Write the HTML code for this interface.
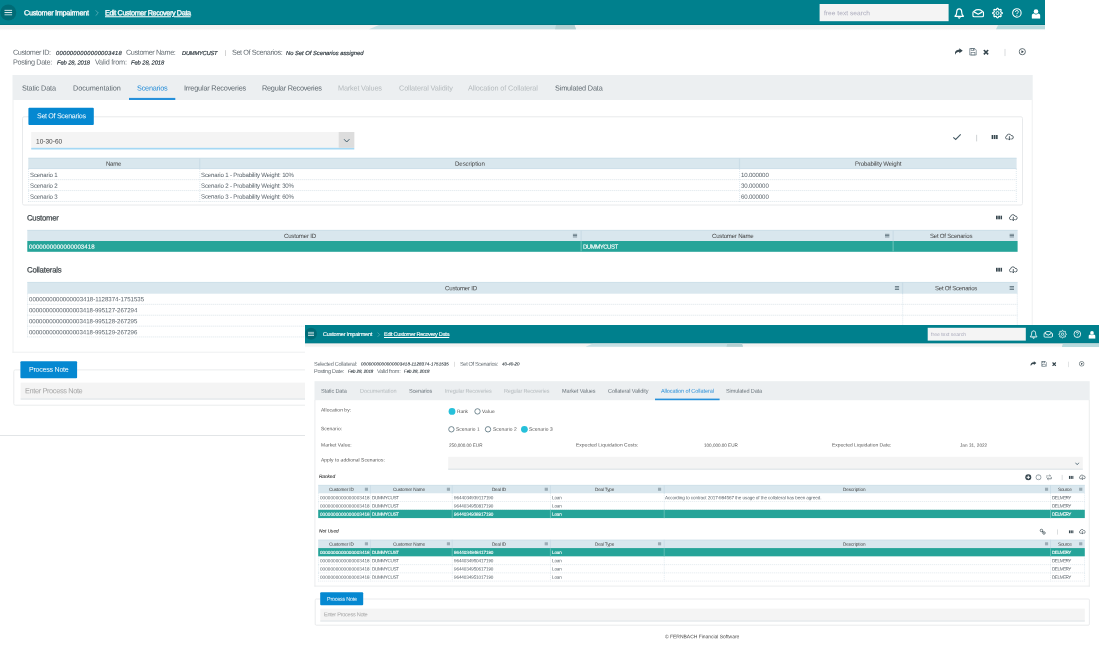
<!DOCTYPE html>
<html><head><meta charset="utf-8"><title>Edit Customer Recovery Data</title>
<style>
html,body{margin:0;padding:0;background:#fff;}
body{width:1099px;height:649px;position:relative;overflow:hidden;font-family:"Liberation Sans",sans-serif;}
#root{position:absolute;left:0;top:0;width:1099px;height:649px;overflow:hidden;will-change:transform;}
#root svg.layer,#root span.t{position:absolute;left:0;top:0;}
span.t{white-space:nowrap;display:block;}
</style></head><body><div id="root">
<svg class="layer" width="1099" height="649" viewBox="0 0 1099 649"><defs><linearGradient id="g1" x1="0" y1="0" x2="0" y2="1"><stop offset="0%" stop-color="#f4f2f1"/><stop offset="60%" stop-color="#f1f3f2"/><stop offset="100%" stop-color="#fff"/></linearGradient></defs>
<rect x="0" y="0" width="1045" height="25" fill="#00808d"/>
<rect x="0" y="25" width="1045" height="5.6" fill="url(#g1)"/>
<rect x="0" y="24.2" width="1045" height="0.8" fill="#00737f"/>
<svg x="369" y="25" width="208" height="5" viewBox="0 0 208 5"><polygon points="0,4.2 10,0 205.5,0 207,4.2" fill="#c6e0e4"/><polygon points="186,4.2 187,0 205.5,0 207,4.2" fill="#b4d0d2"/></svg>
<svg x="996" y="25" width="49" height="5" viewBox="0 0 49 5"><polygon points="0,4.3 2,0.3 49,0.3 49,4.3" fill="#b7dadd"/></svg>
<rect x="0.3" y="4.5" width="16" height="16" rx="8" fill="rgba(0,0,0,.16)"/>
<svg x="4.3" y="9.6" width="8" height="6" viewBox="0 0 80 60"><rect x="0" y="2" width="80" height="9" fill="#fff"/><rect x="0" y="25.5" width="80" height="9" fill="#fff"/><rect x="0" y="49" width="80" height="9" fill="#fff"/></svg>
<svg x="94" y="9.5" width="6" height="7" viewBox="0 0 6 7"><path d="M1.6 0.8 L4.3 3.5 L1.6 6.2" fill="none" stroke="#6fb9c1" stroke-width="0.7"/></svg>
<rect x="819.6" y="4" width="129" height="17.2" fill="#f4f4f4"/>
<svg x="954" y="7.75" width="10.4" height="11.6" viewBox="0 0 20.8 23.2"><path d="M10.4 2.2 C6.6 2.2 5.4 5.6 5.4 9 C5.4 13 4 15 2.2 16.6 V17.4 H18.6 V16.6 C16.8 15 15.4 13 15.4 9 C15.4 5.6 14.2 2.2 10.4 2.2 Z" fill="none" stroke="#fff" stroke-width="2.4" stroke-linejoin="round"/><path d="M7.6 19.4 H13.2 L10.4 22 Z" fill="#fff" stroke="#fff" stroke-width="0.8" stroke-linejoin="round"/></svg>
<svg x="972.1" y="8.95" width="12.2" height="8.6" viewBox="0 0 24 17.2"><path d="M1.4 7.4 C1.4 6.2 2 5.6 3 5 L8 1.8 C9.2 1.2 14.8 1.2 16 1.8 L21 5 C22 5.6 22.6 6.2 22.6 7.4 V13 C22.6 15 21.6 15.8 19.8 15.8 H4.2 C2.4 15.8 1.4 15 1.4 13 Z" fill="none" stroke="#fff" stroke-width="2.4" stroke-linejoin="round"/><path d="M4.4 6.4 L12 10.6 L19.6 6.4" fill="none" stroke="#fff" stroke-width="2.4" stroke-linecap="round" stroke-linejoin="round"/></svg>
<svg x="991.7" y="7.25" width="11.6" height="11.6" viewBox="0 0 24 24"><polygon points="12.00,1.90 12.52,2.04 13.00,2.45 13.42,3.05 13.76,3.74 14.03,4.42 14.28,4.98 14.56,5.34 14.90,5.48 15.35,5.42 15.92,5.20 16.60,4.92 17.33,4.67 18.04,4.54 18.67,4.59 19.14,4.86 19.41,5.33 19.46,5.96 19.33,6.67 19.08,7.40 18.80,8.07 18.58,8.65 18.52,9.10 18.66,9.44 19.02,9.72 19.58,9.97 20.26,10.24 20.95,10.58 21.55,11.00 21.96,11.48 22.10,12.00 21.96,12.52 21.55,13.00 20.95,13.42 20.26,13.76 19.58,14.03 19.02,14.28 18.66,14.56 18.52,14.90 18.58,15.35 18.80,15.92 19.08,16.60 19.33,17.33 19.46,18.04 19.41,18.67 19.14,19.14 18.67,19.41 18.04,19.46 17.33,19.33 16.60,19.08 15.92,18.80 15.35,18.58 14.90,18.52 14.56,18.66 14.28,19.02 14.03,19.58 13.76,20.26 13.42,20.95 13.00,21.55 12.52,21.96 12.00,22.10 11.48,21.96 11.00,21.55 10.58,20.95 10.24,20.26 9.97,19.58 9.72,19.02 9.44,18.66 9.10,18.52 8.65,18.58 8.07,18.80 7.40,19.08 6.67,19.33 5.96,19.46 5.33,19.41 4.86,19.14 4.59,18.67 4.54,18.04 4.67,17.33 4.92,16.60 5.20,15.93 5.42,15.35 5.48,14.90 5.34,14.56 4.98,14.28 4.42,14.03 3.74,13.76 3.05,13.42 2.45,13.00 2.04,12.52 1.90,12.00 2.04,11.48 2.45,11.00 3.05,10.58 3.74,10.24 4.42,9.97 4.98,9.72 5.34,9.44 5.48,9.10 5.42,8.65 5.20,8.07 4.92,7.40 4.67,6.67 4.54,5.96 4.59,5.33 4.86,4.86 5.33,4.59 5.96,4.54 6.67,4.67 7.40,4.92 8.07,5.20 8.65,5.42 9.10,5.48 9.44,5.34 9.72,4.98 9.97,4.42 10.24,3.74 10.58,3.05 11.00,2.45 11.48,2.04" fill="none" stroke="#fff" stroke-width="2.4" stroke-linejoin="round"/><circle cx="12" cy="12" r="3.1" fill="none" stroke="#fff" stroke-width="1.9"/></svg>
<svg x="1011.8" y="7.85" width="10.2" height="10.2" viewBox="0 0 20 20"><circle cx="10" cy="10" r="8.3" fill="none" stroke="#fff" stroke-width="2.1"/><path d="M7.3 8 A2.7 2.7 0 1 1 11 10.4 C10.2 10.9 10 11.4 10 12.4" fill="none" stroke="#fff" stroke-width="1.9"/><circle cx="10" cy="14.9" r="1" fill="#fff"/></svg>
<svg x="1031.4" y="8.85" width="9.2" height="9.8" viewBox="0 0 18.4 19.6"><circle cx="9.2" cy="5.2" r="4.6" fill="#fff"/><path d="M0.6 19 V13.6 C0.6 11.2 2.4 9.6 5 9.4 C6.2 10.6 7.6 11.2 9.2 11.2 C10.8 11.2 12.2 10.6 13.4 9.4 C16 9.6 17.8 11.2 17.8 13.6 V19 C17.8 19.4 17.6 19.6 17.2 19.6 H1.2 C0.8 19.6 0.6 19.4 0.6 19 Z" fill="#fff"/></svg>
<rect x="225" y="50.2" width="0.8" height="5.8" fill="#c8c8c8"/>
<svg x="954.2" y="47.9" width="8.8" height="7.2" viewBox="0 0 20 16"><path d="M11.6 0.6 L19.4 6.4 L11.6 12.2 V8.8 C7.4 8.8 4 10.4 2.6 15.4 C0.2 9 3.6 3.8 11.6 3.8 Z" fill="#37474f"/></svg>
<svg x="969.1" y="47.9" width="7.8" height="7.8" viewBox="0 0 20 20"><path d="M1.6 1.6 H14.4 L18.4 5.6 V18.4 H1.6 Z" fill="#fff" stroke="#546670" stroke-width="1.7" stroke-linejoin="round"/><rect x="5" y="1.8" width="8" height="5" fill="none" stroke="#546670" stroke-width="1.5"/><rect x="5" y="11.4" width="10" height="7" fill="none" stroke="#546670" stroke-width="1.5"/><rect x="10" y="2.6" width="1.8" height="3.2" fill="#546670"/></svg>
<svg x="983.05" y="49.25" width="5.9" height="5.9" viewBox="0 0 12 12"><path d="M1.6 1.6 L10.4 10.4 M10.4 1.6 L1.6 10.4" stroke="#37474f" stroke-width="3.3" stroke-linecap="butt"/></svg>
<rect x="1004.6" y="48.9" width="0.8" height="7.2" fill="#cfd3d5"/>
<svg x="1018.5" y="47.9" width="7.6" height="7.6" viewBox="0 0 20 20"><circle cx="10" cy="10" r="8.2" fill="none" stroke="#37474f" stroke-width="2"/><path d="M7.8 6 L14.2 10 L7.8 14 Z" fill="#37474f"/></svg>
<rect x="12.5" y="75" width="1020.2" height="25" fill="#eceff1"/>
<rect x="129" y="97.9" width="46.3" height="2.1" fill="#2690da"/>
<line x1="1032.2" y1="100" x2="1032.2" y2="352.7" stroke="#eef0f1" stroke-width="1"/>
<line x1="12.5" y1="352.2" x2="1032.7" y2="352.2" stroke="#eef0f1" stroke-width="1"/>
<line x1="13" y1="100" x2="13" y2="352.7" stroke="#eef0f1" stroke-width="1"/>
<rect x="22.5" y="116.8" width="1000" height="88.2" rx="1.5" fill="none" stroke="#e8eaec" stroke-width="1"/>
<rect x="28.4" y="107.8" width="65.4" height="17.2" rx="1" fill="#0588d1"/>
<rect x="31.2" y="132" width="323.1" height="15.8" fill="#f4f4f4"/>
<rect x="31.2" y="147.8" width="323.1" height="1.7" fill="#a4d8f4"/>
<rect x="338.7" y="132" width="15.6" height="15.8" fill="#dddddd"/>
<svg x="343.2" y="138.4" width="7" height="5" viewBox="0 0 7 5"><path d="M0.8 0.8 L3.5 3.6 L6.2 0.8" fill="none" stroke="#45606e" stroke-width="1.0"/></svg>
<svg x="952.5" y="133.5" width="9" height="7" viewBox="0 0 9 7"><path d="M0.8 3.8 L3.2 6 L8.2 0.8" fill="none" stroke="#455a64" stroke-width="1.1"/></svg>
<rect x="976.3" y="134.8" width="0.8" height="6.6" fill="#c4c8ca"/>
<svg x="991.4" y="135" width="6.4" height="4.2" viewBox="0 0 6.4 4.2"><rect x="0.00" y="0" width="1.73" height="4.2" fill="#37474f"/><rect x="2.34" y="0" width="1.73" height="4.2" fill="#37474f"/><rect x="4.67" y="0" width="1.73" height="4.2" fill="#37474f"/></svg>
<svg x="1004.8" y="133.2" width="9.2" height="7.4" viewBox="0 2 24 19.5"><path d="M6 17.5 H5.5 A4 4 0 0 1 5 9.6 A6 6 0 0 1 16.6 8.2 A4.7 4.7 0 0 1 18.5 17.5 H18" fill="none" stroke="#37474f" stroke-width="2.2" stroke-linecap="round"/><path d="M12 11 V19.5 M9 16.8 L12 19.8 L15 16.8" fill="none" stroke="#37474f" stroke-width="2.2" stroke-linecap="round" stroke-linejoin="round"/></svg>
<rect x="28.3" y="157.9" width="988.3" height="11" fill="#d9e7ee"/>
<line x1="28.3" y1="158.2" x2="1016.6" y2="158.2" stroke="#c3d9e4" stroke-width="0.6"/>
<line x1="28.3" y1="168.6" x2="1016.6" y2="168.6" stroke="#c3d9e4" stroke-width="0.6"/>
<rect x="199.1" y="158" width="1.2" height="11" fill="#cbdde7"/>
<line x1="199.8" y1="169" x2="199.8" y2="202" stroke="#c9dae4" stroke-width="0.6" stroke-dasharray="1 1"/>
<rect x="738.9" y="158" width="1.2" height="11" fill="#cbdde7"/>
<line x1="739.6" y1="169" x2="739.6" y2="202" stroke="#c9dae4" stroke-width="0.6" stroke-dasharray="1 1"/>
<line x1="28.6" y1="169" x2="28.6" y2="202" stroke="#c9dae4" stroke-width="0.6" stroke-dasharray="1 1"/>
<line x1="1016.3" y1="169" x2="1016.3" y2="202" stroke="#c9dae4" stroke-width="0.6" stroke-dasharray="1 1"/>
<line x1="28.3" y1="179.65" x2="1016.6" y2="179.65" stroke="#cbd8e0" stroke-width="0.7" stroke-dasharray="1 1"/>
<line x1="28.3" y1="190.55" x2="1016.6" y2="190.55" stroke="#cbd8e0" stroke-width="0.7" stroke-dasharray="1 1"/>
<line x1="28.3" y1="201.45" x2="1016.6" y2="201.45" stroke="#cbd8e0" stroke-width="0.7" stroke-dasharray="1 1"/>
<svg x="996" y="215.4" width="6.2" height="4.2" viewBox="0 0 6.2 4.2"><rect x="0.00" y="0" width="1.67" height="4.2" fill="#37474f"/><rect x="2.26" y="0" width="1.67" height="4.2" fill="#37474f"/><rect x="4.53" y="0" width="1.67" height="4.2" fill="#37474f"/></svg>
<svg x="1008.7" y="213.8" width="9.2" height="7.4" viewBox="0 2 24 19.5"><path d="M6 17.5 H5.5 A4 4 0 0 1 5 9.6 A6 6 0 0 1 16.6 8.2 A4.7 4.7 0 0 1 18.5 17.5 H18" fill="none" stroke="#37474f" stroke-width="2.2" stroke-linecap="round"/><path d="M12 11 V19.5 M9 16.8 L12 19.8 L15 16.8" fill="none" stroke="#37474f" stroke-width="2.2" stroke-linecap="round" stroke-linejoin="round"/></svg>
<rect x="27.3" y="230" width="990.3" height="11" fill="#d9e7ee"/>
<line x1="27.3" y1="230.3" x2="1017.6" y2="230.3" stroke="#c3d9e4" stroke-width="0.6"/>
<rect x="27.3" y="241" width="990.3" height="10.8" fill="#26a499"/>
<rect x="580.5" y="230" width="1.3" height="11" fill="#cbdde7"/>
<rect x="580.5" y="241" width="1.3" height="10.8" fill="#5dbdb3"/>
<rect x="892.5" y="230" width="1.3" height="11" fill="#cbdde7"/>
<rect x="892.5" y="241" width="1.3" height="10.8" fill="#5dbdb3"/>
<svg x="572.7" y="233.5" width="4.6" height="4.2" viewBox="0 0 44 40"><rect x="0" y="2.4" width="44" height="7.6" fill="#566a75"/><rect x="0" y="16" width="44" height="7.6" fill="#566a75"/><rect x="0" y="29.6" width="44" height="7.6" fill="#566a75"/></svg>
<svg x="885" y="233.5" width="4.6" height="4.2" viewBox="0 0 44 40"><rect x="0" y="2.4" width="44" height="7.6" fill="#566a75"/><rect x="0" y="16" width="44" height="7.6" fill="#566a75"/><rect x="0" y="29.6" width="44" height="7.6" fill="#566a75"/></svg>
<svg x="1009.4" y="233.5" width="4.6" height="4.2" viewBox="0 0 44 40"><rect x="0" y="2.4" width="44" height="7.6" fill="#566a75"/><rect x="0" y="16" width="44" height="7.6" fill="#566a75"/><rect x="0" y="29.6" width="44" height="7.6" fill="#566a75"/></svg>
<svg x="996" y="267.6" width="6.2" height="4.2" viewBox="0 0 6.2 4.2"><rect x="0.00" y="0" width="1.67" height="4.2" fill="#37474f"/><rect x="2.26" y="0" width="1.67" height="4.2" fill="#37474f"/><rect x="4.53" y="0" width="1.67" height="4.2" fill="#37474f"/></svg>
<svg x="1008.7" y="266" width="9.2" height="7.4" viewBox="0 2 24 19.5"><path d="M6 17.5 H5.5 A4 4 0 0 1 5 9.6 A6 6 0 0 1 16.6 8.2 A4.7 4.7 0 0 1 18.5 17.5 H18" fill="none" stroke="#37474f" stroke-width="2.2" stroke-linecap="round"/><path d="M12 11 V19.5 M9 16.8 L12 19.8 L15 16.8" fill="none" stroke="#37474f" stroke-width="2.2" stroke-linecap="round" stroke-linejoin="round"/></svg>
<rect x="27.3" y="282.1" width="990.3" height="11.6" fill="#d9e7ee"/>
<line x1="27.3" y1="282.4" x2="1017.6" y2="282.4" stroke="#c3d9e4" stroke-width="0.6"/>
<rect x="901.9" y="282.1" width="1.3" height="11.6" fill="#cbdde7"/>
<svg x="894.7" y="285.9" width="4.6" height="4.2" viewBox="0 0 44 40"><rect x="0" y="2.4" width="44" height="7.6" fill="#566a75"/><rect x="0" y="16" width="44" height="7.6" fill="#566a75"/><rect x="0" y="29.6" width="44" height="7.6" fill="#566a75"/></svg>
<svg x="1009.4" y="285.9" width="4.6" height="4.2" viewBox="0 0 44 40"><rect x="0" y="2.4" width="44" height="7.6" fill="#566a75"/><rect x="0" y="16" width="44" height="7.6" fill="#566a75"/><rect x="0" y="29.6" width="44" height="7.6" fill="#566a75"/></svg>
<line x1="27.6" y1="293.6" x2="27.6" y2="337.6" stroke="#c9dae4" stroke-width="0.6" stroke-dasharray="1 1"/>
<line x1="902.7" y1="293.6" x2="902.7" y2="337.6" stroke="#c9dae4" stroke-width="0.6" stroke-dasharray="1 1"/>
<line x1="1017.3" y1="293.6" x2="1017.3" y2="337.6" stroke="#c9dae4" stroke-width="0.6" stroke-dasharray="1 1"/>
<line x1="27.3" y1="304.35" x2="1017.6" y2="304.35" stroke="#cbd8e0" stroke-width="0.7" stroke-dasharray="1 1"/>
<line x1="27.3" y1="315.25" x2="1017.6" y2="315.25" stroke="#cbd8e0" stroke-width="0.7" stroke-dasharray="1 1"/>
<line x1="27.3" y1="326.15" x2="1017.6" y2="326.15" stroke="#cbd8e0" stroke-width="0.7" stroke-dasharray="1 1"/>
<line x1="27.3" y1="336.95" x2="1017.6" y2="336.95" stroke="#cbd8e0" stroke-width="0.7" stroke-dasharray="1 1"/>
<rect x="13.8" y="369.9" width="1019" height="35.3" rx="1.5" fill="none" stroke="#eaeced" stroke-width="1"/>
<rect x="20.4" y="361.2" width="56.7" height="17" rx="1" fill="#0588d1"/>
<rect x="20.6" y="382.6" width="1006" height="17" fill="#f4f4f4"/>
<line x1="20.6" y1="399" x2="1026.6" y2="399" stroke="#dde4e8" stroke-width="1.2"/>
<rect x="0" y="435" width="1045" height="0.9" fill="#dfe3e5"/>
</svg>
<span class="t" style="left:24.40px;top:8px;transform:translateY(0.22px) rotate(0.03deg);font-size:7.3px;line-height:10.22px;color:#fff;letter-spacing:-0.288px;-webkit-text-stroke:0.3px #fff;">Customer Impairment</span>
<span class="t" style="left:104.80px;top:8px;transform:translateY(0.22px) rotate(0.03deg);font-size:7.3px;line-height:10.22px;color:#fff;letter-spacing:-0.402px;-webkit-text-stroke:0.3px #fff;text-decoration:underline;">Edit Customer Recovery Data</span>
<span class="t" style="left:823.80px;top:8px;transform:translateY(0.24px) rotate(0.03deg);font-size:6.6px;line-height:9.24px;color:#aab;letter-spacing:0.034px;">free text search</span>
<span class="t" style="left:12.80px;top:47px;transform:translateY(0.82px) rotate(0.03deg);font-size:7.3px;line-height:10.22px;color:#656d73;letter-spacing:-0.454px;">Customer ID:</span>
<span class="t" style="left:56.00px;top:48px;transform:translateY(0.92px) rotate(0.03deg);font-size:5.8px;line-height:8.12px;color:#2c363d;letter-spacing:0.245px;font-style:italic;-webkit-text-stroke:0.18px #2c363d;">0000000000000003418</span>
<span class="t" style="left:125.60px;top:47px;transform:translateY(0.82px) rotate(0.03deg);font-size:7.3px;line-height:10.22px;color:#656d73;letter-spacing:-0.406px;">Customer Name:</span>
<span class="t" style="left:182.00px;top:48px;transform:translateY(0.92px) rotate(0.03deg);font-size:5.8px;line-height:8.12px;color:#2c363d;letter-spacing:-0.262px;font-style:italic;-webkit-text-stroke:0.18px #2c363d;">DUMMYCUST</span>
<span class="t" style="left:232.30px;top:47px;transform:translateY(0.82px) rotate(0.03deg);font-size:7.3px;line-height:10.22px;color:#656d73;letter-spacing:-0.407px;">Set Of Scenarios:</span>
<span class="t" style="left:285.60px;top:48px;transform:translateY(0.92px) rotate(0.03deg);font-size:5.8px;line-height:8.12px;color:#2c363d;letter-spacing:-0.011px;font-style:italic;-webkit-text-stroke:0.18px #2c363d;">No Set Of Scenarios assigned</span>
<span class="t" style="left:12.80px;top:57px;transform:translateY(0.42px) rotate(0.03deg);font-size:7.3px;line-height:10.22px;color:#656d73;letter-spacing:-0.385px;">Posting Date:</span>
<span class="t" style="left:57.30px;top:58px;transform:translateY(0.52px) rotate(0.03deg);font-size:5.8px;line-height:8.12px;color:#2c363d;letter-spacing:-0.098px;font-style:italic;-webkit-text-stroke:0.18px #2c363d;">Feb 28, 2018</span>
<span class="t" style="left:94.60px;top:57px;transform:translateY(0.42px) rotate(0.03deg);font-size:7.3px;line-height:10.22px;color:#656d73;letter-spacing:-0.235px;">Valid from:</span>
<span class="t" style="left:131.20px;top:58px;transform:translateY(0.52px) rotate(0.03deg);font-size:5.8px;line-height:8.12px;color:#2c363d;letter-spacing:-0.089px;font-style:italic;-webkit-text-stroke:0.18px #2c363d;">Feb 28, 2018</span>
<span class="t" style="left:22.00px;top:83px;transform:translateY(0.52px) rotate(0.03deg);font-size:7.3px;line-height:10.22px;color:#5f6970;letter-spacing:-0.171px;">Static Data</span>
<span class="t" style="left:72.90px;top:83px;transform:translateY(0.52px) rotate(0.03deg);font-size:7.3px;line-height:10.22px;color:#5f6970;letter-spacing:-0.100px;">Documentation</span>
<span class="t" style="left:136.80px;top:83px;transform:translateY(0.52px) rotate(0.03deg);font-size:7.3px;line-height:10.22px;color:#2a8fd8;letter-spacing:-0.220px;">Scenarios</span>
<span class="t" style="left:183.80px;top:83px;transform:translateY(0.52px) rotate(0.03deg);font-size:7.3px;line-height:10.22px;color:#5f6970;letter-spacing:-0.186px;">Irregular Recoveries</span>
<span class="t" style="left:262.00px;top:83px;transform:translateY(0.52px) rotate(0.03deg);font-size:7.3px;line-height:10.22px;color:#5f6970;letter-spacing:-0.242px;">Regular Recoveries</span>
<span class="t" style="left:338.30px;top:83px;transform:translateY(0.52px) rotate(0.03deg);font-size:7.3px;line-height:10.22px;color:#b4babd;letter-spacing:-0.177px;">Market Values</span>
<span class="t" style="left:398.60px;top:83px;transform:translateY(0.52px) rotate(0.03deg);font-size:7.3px;line-height:10.22px;color:#b4babd;letter-spacing:-0.114px;">Collateral Validity</span>
<span class="t" style="left:468.40px;top:83px;transform:translateY(0.52px) rotate(0.03deg);font-size:7.3px;line-height:10.22px;color:#b4babd;letter-spacing:-0.119px;">Allocation of Collateral</span>
<span class="t" style="left:554.60px;top:83px;transform:translateY(0.52px) rotate(0.03deg);font-size:7.3px;line-height:10.22px;color:#5f6970;letter-spacing:-0.162px;">Simulated Data</span>
<span class="t" style="left:36.60px;top:112px;transform:translateY(0.24px) rotate(0.03deg);font-size:7.1px;line-height:9.94px;color:#fff;letter-spacing:-0.311px;">Set Of Scenarios</span>
<span class="t" style="left:35.80px;top:136px;transform:translateY(0.50px) rotate(0.03deg);font-size:6.5px;line-height:9.1px;color:#444;letter-spacing:0.026px;">10-30-60</span>
<span class="t" style="left:106.40px;top:159px;transform:translateY(0.84px) rotate(0.03deg);font-size:6.1px;line-height:8.54px;color:#444;letter-spacing:-0.291px;">Name</span>
<span class="t" style="left:454.60px;top:159px;transform:translateY(0.84px) rotate(0.03deg);font-size:6.1px;line-height:8.54px;color:#444;letter-spacing:-0.071px;">Description</span>
<span class="t" style="left:854.50px;top:159px;transform:translateY(0.84px) rotate(0.03deg);font-size:6.1px;line-height:8.54px;color:#444;letter-spacing:-0.150px;">Probability Weight</span>
<span class="t" style="left:30.00px;top:170px;transform:translateY(0.94px) rotate(0.03deg);font-size:6.1px;line-height:8.54px;color:#566068;letter-spacing:-0.152px;">Scenario 1</span>
<span class="t" style="left:201.20px;top:170px;transform:translateY(0.94px) rotate(0.03deg);font-size:6.1px;line-height:8.54px;color:#566068;letter-spacing:-0.175px;">Scenario 1 - Probability Weight: 10%</span>
<span class="t" style="left:741.20px;top:170px;transform:translateY(0.94px) rotate(0.03deg);font-size:6.1px;line-height:8.54px;color:#566068;letter-spacing:-0.129px;">10.000000</span>
<span class="t" style="left:30.00px;top:181px;transform:translateY(0.74px) rotate(0.03deg);font-size:6.1px;line-height:8.54px;color:#566068;letter-spacing:-0.152px;">Scenario 2</span>
<span class="t" style="left:201.20px;top:181px;transform:translateY(0.74px) rotate(0.03deg);font-size:6.1px;line-height:8.54px;color:#566068;letter-spacing:-0.175px;">Scenario 2 - Probability Weight: 30%</span>
<span class="t" style="left:741.20px;top:181px;transform:translateY(0.74px) rotate(0.03deg);font-size:6.1px;line-height:8.54px;color:#566068;letter-spacing:-0.129px;">30.000000</span>
<span class="t" style="left:30.00px;top:192px;transform:translateY(0.64px) rotate(0.03deg);font-size:6.1px;line-height:8.54px;color:#566068;letter-spacing:-0.152px;">Scenario 3</span>
<span class="t" style="left:201.20px;top:192px;transform:translateY(0.64px) rotate(0.03deg);font-size:6.1px;line-height:8.54px;color:#566068;letter-spacing:-0.175px;">Scenario 3 - Probability Weight: 60%</span>
<span class="t" style="left:741.20px;top:192px;transform:translateY(0.64px) rotate(0.03deg);font-size:6.1px;line-height:8.54px;color:#566068;letter-spacing:-0.129px;">60.000000</span>
<span class="t" style="left:27.30px;top:213px;transform:translateY(0.52px) rotate(0.03deg);font-size:7.8px;line-height:10.92px;color:#434a4e;letter-spacing:-0.273px;-webkit-text-stroke:0.24px #434a4e;">Customer</span>
<span class="t" style="left:283.90px;top:231px;transform:translateY(0.94px) rotate(0.03deg);font-size:6.1px;line-height:8.54px;color:#444;letter-spacing:-0.214px;">Customer ID</span>
<span class="t" style="left:712.00px;top:231px;transform:translateY(0.94px) rotate(0.03deg);font-size:6.1px;line-height:8.54px;color:#444;letter-spacing:-0.217px;">Customer Name</span>
<span class="t" style="left:929.80px;top:231px;transform:translateY(0.94px) rotate(0.03deg);font-size:6.1px;line-height:8.54px;color:#444;letter-spacing:-0.241px;">Set Of Scenarios</span>
<span class="t" style="left:29.00px;top:242px;transform:translateY(0.84px) rotate(0.03deg);font-size:6.1px;line-height:8.54px;color:#fff;letter-spacing:0.069px;-webkit-text-stroke:0.12px #fff;">0000000000000003418</span>
<span class="t" style="left:582.80px;top:242px;transform:translateY(0.84px) rotate(0.03deg);font-size:6.1px;line-height:8.54px;color:#fff;letter-spacing:-0.556px;-webkit-text-stroke:0.12px #fff;">DUMMYCUST</span>
<span class="t" style="left:27.30px;top:265px;transform:translateY(0.52px) rotate(0.03deg);font-size:7.8px;line-height:10.92px;color:#434a4e;letter-spacing:-0.215px;-webkit-text-stroke:0.24px #434a4e;">Collaterals</span>
<span class="t" style="left:444.80px;top:284px;transform:translateY(0.34px) rotate(0.03deg);font-size:6.1px;line-height:8.54px;color:#444;letter-spacing:-0.204px;">Customer ID</span>
<span class="t" style="left:934.60px;top:284px;transform:translateY(0.34px) rotate(0.03deg);font-size:6.1px;line-height:8.54px;color:#444;letter-spacing:-0.247px;">Set Of Scenarios</span>
<span class="t" style="left:29.00px;top:295px;transform:translateY(0.34px) rotate(0.03deg);font-size:6.1px;line-height:8.54px;color:#566068;letter-spacing:-0.011px;">0000000000000003418-1128374-1751535</span>
<span class="t" style="left:29.00px;top:306px;transform:translateY(0.29px) rotate(0.03deg);font-size:6.1px;line-height:8.54px;color:#566068;letter-spacing:-0.026px;">0000000000000003418-995127-267294</span>
<span class="t" style="left:29.00px;top:317px;transform:translateY(0.24px) rotate(0.03deg);font-size:6.1px;line-height:8.54px;color:#566068;letter-spacing:-0.026px;">0000000000000003418-995128-267295</span>
<span class="t" style="left:29.00px;top:328px;transform:translateY(0.19px) rotate(0.03deg);font-size:6.1px;line-height:8.54px;color:#566068;letter-spacing:-0.026px;">0000000000000003418-995129-267296</span>
<span class="t" style="left:29.00px;top:365px;transform:translateY(0.74px) rotate(0.03deg);font-size:7.1px;line-height:9.94px;color:#fff;letter-spacing:-0.256px;">Process Note</span>
<span class="t" style="left:25.00px;top:386px;transform:translateY(0.16px) rotate(0.03deg);font-size:7.4px;line-height:10.36px;color:#a6a6a6;letter-spacing:-0.374px;">Enter Process Note</span>
<svg class="layer" width="1099" height="649" viewBox="0 0 1099 649"><defs><linearGradient id="g2" x1="0" y1="0" x2="0" y2="1"><stop offset="0%" stop-color="#f4f2f1"/><stop offset="60%" stop-color="#f1f3f2"/><stop offset="100%" stop-color="#fff"/></linearGradient></defs>
<rect x="305" y="325" width="794" height="324" fill="#fff"/>
<rect x="305" y="325" width="794" height="18.4" fill="#00808d"/>
<rect x="305" y="342.9" width="794" height="0.6" fill="#00717d"/>
<rect x="305" y="343.5" width="794" height="4.2" fill="url(#g2)"/>
<svg x="585.5" y="343.6" width="158" height="4" viewBox="0 0 158 4"><polygon points="0,3.2 7.6,0 156.4,0 157.5,3.2" fill="#c6e0e4"/><polygon points="141,3.2 141.8,0 156.4,0 157.5,3.2" fill="#b4d0d2"/></svg>
<svg x="1061.8" y="343.6" width="38" height="4" viewBox="0 0 38 4"><polygon points="0,3.3 1,0.2 38,0.2 38,3.3" fill="#b7dadd"/></svg>
<rect x="305" y="327.7" width="12" height="12" rx="6" fill="rgba(0,0,0,.16)"/>
<svg x="308" y="331.6" width="6.1" height="4.6" viewBox="0 0 62 46"><rect x="0" y="2" width="62" height="7" fill="#fff"/><rect x="0" y="19.5" width="62" height="7" fill="#fff"/><rect x="0" y="37" width="62" height="7" fill="#fff"/></svg>
<svg x="376.4" y="332" width="4.6" height="5.4" viewBox="0 0 4.6 5.4"><path d="M1.2 0.6 L3.3 2.7 L1.2 4.8" fill="none" stroke="#6fb9c1" stroke-width="0.55"/></svg>
<rect x="927.7" y="327.8" width="98.1" height="12.8" fill="#f4f4f4"/>
<svg x="1029.45" y="329.97" width="8.3" height="9.26" viewBox="0 0 20.8 23.2"><path d="M10.4 2.2 C6.6 2.2 5.4 5.6 5.4 9 C5.4 13 4 15 2.2 16.6 V17.4 H18.6 V16.6 C16.8 15 15.4 13 15.4 9 C15.4 5.6 14.2 2.2 10.4 2.2 Z" fill="none" stroke="#fff" stroke-width="2.4" stroke-linejoin="round"/><path d="M7.6 19.4 H13.2 L10.4 22 Z" fill="#fff" stroke="#fff" stroke-width="0.8" stroke-linejoin="round"/></svg>
<svg x="1043.33" y="330.93" width="9.74" height="6.86" viewBox="0 0 24 17.2"><path d="M1.4 7.4 C1.4 6.2 2 5.6 3 5 L8 1.8 C9.2 1.2 14.8 1.2 16 1.8 L21 5 C22 5.6 22.6 6.2 22.6 7.4 V13 C22.6 15 21.6 15.8 19.8 15.8 H4.2 C2.4 15.8 1.4 15 1.4 13 Z" fill="none" stroke="#fff" stroke-width="2.4" stroke-linejoin="round"/><path d="M4.4 6.4 L12 10.6 L19.6 6.4" fill="none" stroke="#fff" stroke-width="2.4" stroke-linecap="round" stroke-linejoin="round"/></svg>
<svg x="1057.97" y="329.57" width="9.26" height="9.26" viewBox="0 0 24 24"><polygon points="12.00,1.90 12.52,2.04 13.00,2.45 13.42,3.05 13.76,3.74 14.03,4.42 14.28,4.98 14.56,5.34 14.90,5.48 15.35,5.42 15.92,5.20 16.60,4.92 17.33,4.67 18.04,4.54 18.67,4.59 19.14,4.86 19.41,5.33 19.46,5.96 19.33,6.67 19.08,7.40 18.80,8.07 18.58,8.65 18.52,9.10 18.66,9.44 19.02,9.72 19.58,9.97 20.26,10.24 20.95,10.58 21.55,11.00 21.96,11.48 22.10,12.00 21.96,12.52 21.55,13.00 20.95,13.42 20.26,13.76 19.58,14.03 19.02,14.28 18.66,14.56 18.52,14.90 18.58,15.35 18.80,15.92 19.08,16.60 19.33,17.33 19.46,18.04 19.41,18.67 19.14,19.14 18.67,19.41 18.04,19.46 17.33,19.33 16.60,19.08 15.92,18.80 15.35,18.58 14.90,18.52 14.56,18.66 14.28,19.02 14.03,19.58 13.76,20.26 13.42,20.95 13.00,21.55 12.52,21.96 12.00,22.10 11.48,21.96 11.00,21.55 10.58,20.95 10.24,20.26 9.97,19.58 9.72,19.02 9.44,18.66 9.10,18.52 8.65,18.58 8.07,18.80 7.40,19.08 6.67,19.33 5.96,19.46 5.33,19.41 4.86,19.14 4.59,18.67 4.54,18.04 4.67,17.33 4.92,16.60 5.20,15.93 5.42,15.35 5.48,14.90 5.34,14.56 4.98,14.28 4.42,14.03 3.74,13.76 3.05,13.42 2.45,13.00 2.04,12.52 1.90,12.00 2.04,11.48 2.45,11.00 3.05,10.58 3.74,10.24 4.42,9.97 4.98,9.72 5.34,9.44 5.48,9.10 5.42,8.65 5.20,8.07 4.92,7.40 4.67,6.67 4.54,5.96 4.59,5.33 4.86,4.86 5.33,4.59 5.96,4.54 6.67,4.67 7.40,4.92 8.07,5.20 8.65,5.42 9.10,5.48 9.44,5.34 9.72,4.98 9.97,4.42 10.24,3.74 10.58,3.05 11.00,2.45 11.48,2.04" fill="none" stroke="#fff" stroke-width="2.4" stroke-linejoin="round"/><circle cx="12" cy="12" r="3.1" fill="none" stroke="#fff" stroke-width="1.9"/></svg>
<svg x="1073.23" y="330.05" width="8.14" height="8.14" viewBox="0 0 20 20"><circle cx="10" cy="10" r="8.3" fill="none" stroke="#fff" stroke-width="2.1"/><path d="M7.3 8 A2.7 2.7 0 1 1 11 10.4 C10.2 10.9 10 11.4 10 12.4" fill="none" stroke="#fff" stroke-width="1.9"/><circle cx="10" cy="14.9" r="1" fill="#fff"/></svg>
<svg x="1088.33" y="330.85" width="7.34" height="7.82" viewBox="0 0 18.4 19.6"><circle cx="9.2" cy="5.2" r="4.6" fill="#fff"/><path d="M0.6 19 V13.6 C0.6 11.2 2.4 9.6 5 9.4 C6.2 10.6 7.6 11.2 9.2 11.2 C10.8 11.2 12.2 10.6 13.4 9.4 C16 9.6 17.8 11.2 17.8 13.6 V19 C17.8 19.4 17.6 19.6 17.2 19.6 H1.2 C0.8 19.6 0.6 19.4 0.6 19 Z" fill="#fff"/></svg>
<rect x="454" y="361.8" width="0.6" height="5" fill="#ccc"/>
<svg x="1029.96" y="360.91" width="6.69" height="5.47" viewBox="0 0 20 16"><path d="M11.6 0.6 L19.4 6.4 L11.6 12.2 V8.8 C7.4 8.8 4 10.4 2.6 15.4 C0.2 9 3.6 3.8 11.6 3.8 Z" fill="#37474f"/></svg>
<svg x="1041.04" y="360.91" width="5.93" height="5.93" viewBox="0 0 20 20"><path d="M1.6 1.6 H14.4 L18.4 5.6 V18.4 H1.6 Z" fill="#fff" stroke="#546670" stroke-width="1.7" stroke-linejoin="round"/><rect x="5" y="1.8" width="8" height="5" fill="none" stroke="#546670" stroke-width="1.5"/><rect x="5" y="11.4" width="10" height="7" fill="none" stroke="#546670" stroke-width="1.5"/><rect x="10" y="2.6" width="1.8" height="3.2" fill="#546670"/></svg>
<svg x="1051.96" y="361.94" width="4.48" height="4.48" viewBox="0 0 12 12"><path d="M1.6 1.6 L10.4 10.4 M10.4 1.6 L1.6 10.4" stroke="#37474f" stroke-width="3.3" stroke-linecap="butt"/></svg>
<rect x="1068.1" y="361.67" width="0.61" height="5.47" fill="#cfd3d5"/>
<svg x="1078.81" y="360.91" width="5.78" height="5.78" viewBox="0 0 20 20"><circle cx="10" cy="10" r="8.2" fill="none" stroke="#37474f" stroke-width="2"/><path d="M7.8 6 L14.2 10 L7.8 14 Z" fill="#37474f"/></svg>
<rect x="314.5" y="381.2" width="775.2" height="19" fill="#eceff1"/>
<rect x="655" y="398.6" width="64.6" height="1.6" fill="#2690da"/>
<line x1="1089.3" y1="400" x2="1089.3" y2="586.5" stroke="#e6e8ea" stroke-width="0.8"/>
<line x1="314.5" y1="586.1" x2="1089.7" y2="586.1" stroke="#e6e8ea" stroke-width="0.8"/>
<line x1="314.9" y1="400" x2="314.9" y2="586.5" stroke="#e6e8ea" stroke-width="0.8"/>
<rect x="448.6" y="408" width="6.8" height="6.8" rx="3.4" fill="#26c0da"/>
<rect x="474.8" y="408.7" width="5.4" height="5.4" rx="2.7" fill="#fff" stroke="#546e7a" stroke-width="0.8"/>
<rect x="448.7" y="426.6" width="5.4" height="5.4" rx="2.7" fill="#fff" stroke="#546e7a" stroke-width="0.8"/>
<rect x="485.3" y="426.6" width="5.4" height="5.4" rx="2.7" fill="#fff" stroke="#546e7a" stroke-width="0.8"/>
<rect x="521" y="425.9" width="6.8" height="6.8" rx="3.4" fill="#26c0da"/>
<rect x="448.2" y="456.8" width="634.6" height="12.8" fill="#f4f4f4"/>
<line x1="448.2" y1="469.2" x2="1082.8" y2="469.2" stroke="#d3dde2" stroke-width="0.8"/>
<svg x="1074.8" y="461.9" width="4.8" height="4" viewBox="0 0 4.8 4"><path d="M0.6 0.8 L2.4 2.8 L4.2 0.8" fill="none" stroke="#45606e" stroke-width="0.85"/></svg>
<svg x="1024.8" y="473.8" width="7" height="7" viewBox="0 0 20 20"><circle cx="10" cy="10" r="8.6" fill="#37474f"/><path d="M10 5.2 V14.8 M5.2 10 H14.8" stroke="#fff" stroke-width="2.8"/></svg>
<svg x="1035.2" y="474" width="6.6" height="6.6" viewBox="0 0 20 20"><circle cx="10" cy="10" r="7.6" fill="none" stroke="#5f6f78" stroke-width="1.9"/><path d="M10 3 V7 M10 13 V17" stroke="#b8c0c4" stroke-width="1.5"/></svg>
<svg x="1045.2" y="473.5" width="7.6" height="7.6" viewBox="0 0 20 20"><path d="M4 11 V6 H14 M11.5 3.4 L14.2 6 L11.5 8.6" fill="none" stroke="#37474f" stroke-width="1.6" stroke-dasharray="2.4 1.2"/><path d="M16 9 V14 H6 M8.5 11.4 L5.8 14 L8.5 16.6" fill="none" stroke="#37474f" stroke-width="1.6"/></svg>
<rect x="1061.8" y="474.9" width="0.6" height="5.2" fill="#c4c8ca"/>
<svg x="1068.8" y="475.7" width="4.8" height="3.2" viewBox="0 0 4.8 3.2"><rect x="0.00" y="0" width="1.30" height="3.2" fill="#37474f"/><rect x="1.75" y="0" width="1.30" height="3.2" fill="#37474f"/><rect x="3.50" y="0" width="1.30" height="3.2" fill="#37474f"/></svg>
<svg x="1078.8" y="474.3" width="7" height="5.6" viewBox="0 2 24 19.5"><path d="M6 17.5 H5.5 A4 4 0 0 1 5 9.6 A6 6 0 0 1 16.6 8.2 A4.7 4.7 0 0 1 18.5 17.5 H18" fill="none" stroke="#37474f" stroke-width="2.2" stroke-linecap="round"/><path d="M12 11 V19.5 M9 16.8 L12 19.8 L15 16.8" fill="none" stroke="#37474f" stroke-width="2.2" stroke-linecap="round" stroke-linejoin="round"/></svg>
<svg x="1039.2" y="528.2" width="7" height="7" viewBox="0 0 20 20"><circle cx="6.4" cy="6.4" r="3.6" fill="none" stroke="#37474f" stroke-width="2"/><circle cx="13.6" cy="13.6" r="3.6" fill="none" stroke="#37474f" stroke-width="2"/><path d="M8 8 L12 12" stroke="#37474f" stroke-width="2.2"/></svg>
<rect x="1057.2" y="529.4" width="0.6" height="5.2" fill="#c4c8ca"/>
<svg x="1068.8" y="530.2" width="4.8" height="3.2" viewBox="0 0 4.8 3.2"><rect x="0.00" y="0" width="1.30" height="3.2" fill="#37474f"/><rect x="1.75" y="0" width="1.30" height="3.2" fill="#37474f"/><rect x="3.50" y="0" width="1.30" height="3.2" fill="#37474f"/></svg>
<svg x="1078.8" y="528.8" width="7" height="5.6" viewBox="0 2 24 19.5"><path d="M6 17.5 H5.5 A4 4 0 0 1 5 9.6 A6 6 0 0 1 16.6 8.2 A4.7 4.7 0 0 1 18.5 17.5 H18" fill="none" stroke="#37474f" stroke-width="2.2" stroke-linecap="round"/><path d="M12 11 V19.5 M9 16.8 L12 19.8 L15 16.8" fill="none" stroke="#37474f" stroke-width="2.2" stroke-linecap="round" stroke-linejoin="round"/></svg>
<rect x="318.2" y="485" width="766.6" height="8.27" fill="#d9e7ee"/>
<line x1="318.2" y1="485.25" x2="1084.8" y2="485.25" stroke="#c3d9e4" stroke-width="0.5"/>
<svg x="364.65" y="487.54" width="3.5" height="3.19" viewBox="0 0 44 40"><rect x="0" y="2.4" width="44" height="7.6" fill="#566a75"/><rect x="0" y="16" width="44" height="7.6" fill="#566a75"/><rect x="0" y="29.6" width="44" height="7.6" fill="#566a75"/></svg>
<svg x="446.65" y="487.54" width="3.5" height="3.19" viewBox="0 0 44 40"><rect x="0" y="2.4" width="44" height="7.6" fill="#566a75"/><rect x="0" y="16" width="44" height="7.6" fill="#566a75"/><rect x="0" y="29.6" width="44" height="7.6" fill="#566a75"/></svg>
<svg x="544.45" y="487.54" width="3.5" height="3.19" viewBox="0 0 44 40"><rect x="0" y="2.4" width="44" height="7.6" fill="#566a75"/><rect x="0" y="16" width="44" height="7.6" fill="#566a75"/><rect x="0" y="29.6" width="44" height="7.6" fill="#566a75"/></svg>
<svg x="657.85" y="487.54" width="3.5" height="3.19" viewBox="0 0 44 40"><rect x="0" y="2.4" width="44" height="7.6" fill="#566a75"/><rect x="0" y="16" width="44" height="7.6" fill="#566a75"/><rect x="0" y="29.6" width="44" height="7.6" fill="#566a75"/></svg>
<svg x="1044.85" y="487.54" width="3.5" height="3.19" viewBox="0 0 44 40"><rect x="0" y="2.4" width="44" height="7.6" fill="#566a75"/><rect x="0" y="16" width="44" height="7.6" fill="#566a75"/><rect x="0" y="29.6" width="44" height="7.6" fill="#566a75"/></svg>
<svg x="1079.05" y="487.54" width="3.5" height="3.19" viewBox="0 0 44 40"><rect x="0" y="2.4" width="44" height="7.6" fill="#566a75"/><rect x="0" y="16" width="44" height="7.6" fill="#566a75"/><rect x="0" y="29.6" width="44" height="7.6" fill="#566a75"/></svg>
<rect x="369.9" y="485" width="1" height="8.27" fill="#cbdde7"/>
<rect x="451.7" y="485" width="1" height="8.27" fill="#cbdde7"/>
<rect x="549.9" y="485" width="1" height="8.27" fill="#cbdde7"/>
<rect x="663.7" y="485" width="1" height="8.27" fill="#cbdde7"/>
<rect x="1050" y="485" width="1" height="8.27" fill="#cbdde7"/>
<line x1="318.2" y1="501.51" x2="1084.8" y2="501.51" stroke="#cbd8e0" stroke-width="0.55" stroke-dasharray="1 1"/>
<line x1="370.45" y1="493.27" x2="370.45" y2="501.54" stroke="#c9dae4" stroke-width="0.5" stroke-dasharray="1 1"/>
<line x1="452.25" y1="493.27" x2="452.25" y2="501.54" stroke="#c9dae4" stroke-width="0.5" stroke-dasharray="1 1"/>
<line x1="550.45" y1="493.27" x2="550.45" y2="501.54" stroke="#c9dae4" stroke-width="0.5" stroke-dasharray="1 1"/>
<line x1="664.25" y1="493.27" x2="664.25" y2="501.54" stroke="#c9dae4" stroke-width="0.5" stroke-dasharray="1 1"/>
<line x1="1050.55" y1="493.27" x2="1050.55" y2="501.54" stroke="#c9dae4" stroke-width="0.5" stroke-dasharray="1 1"/>
<line x1="318.45" y1="493.27" x2="318.45" y2="501.54" stroke="#c9dae4" stroke-width="0.5" stroke-dasharray="1 1"/>
<line x1="1084.55" y1="493.27" x2="1084.55" y2="501.54" stroke="#c9dae4" stroke-width="0.5" stroke-dasharray="1 1"/>
<line x1="318.2" y1="509.78" x2="1084.8" y2="509.78" stroke="#cbd8e0" stroke-width="0.55" stroke-dasharray="1 1"/>
<line x1="370.45" y1="501.54" x2="370.45" y2="509.81" stroke="#c9dae4" stroke-width="0.5" stroke-dasharray="1 1"/>
<line x1="452.25" y1="501.54" x2="452.25" y2="509.81" stroke="#c9dae4" stroke-width="0.5" stroke-dasharray="1 1"/>
<line x1="550.45" y1="501.54" x2="550.45" y2="509.81" stroke="#c9dae4" stroke-width="0.5" stroke-dasharray="1 1"/>
<line x1="664.25" y1="501.54" x2="664.25" y2="509.81" stroke="#c9dae4" stroke-width="0.5" stroke-dasharray="1 1"/>
<line x1="1050.55" y1="501.54" x2="1050.55" y2="509.81" stroke="#c9dae4" stroke-width="0.5" stroke-dasharray="1 1"/>
<line x1="318.45" y1="501.54" x2="318.45" y2="509.81" stroke="#c9dae4" stroke-width="0.5" stroke-dasharray="1 1"/>
<line x1="1084.55" y1="501.54" x2="1084.55" y2="509.81" stroke="#c9dae4" stroke-width="0.5" stroke-dasharray="1 1"/>
<rect x="318.2" y="509.81" width="766.6" height="8.27" fill="#26a499"/>
<rect x="369.9" y="509.81" width="1" height="8.27" fill="#5dbdb3"/>
<rect x="451.7" y="509.81" width="1" height="8.27" fill="#5dbdb3"/>
<rect x="549.9" y="509.81" width="1" height="8.27" fill="#5dbdb3"/>
<rect x="663.7" y="509.81" width="1" height="8.27" fill="#5dbdb3"/>
<rect x="1050" y="509.81" width="1" height="8.27" fill="#5dbdb3"/>
<rect x="318.2" y="539.8" width="766.6" height="8.27" fill="#d9e7ee"/>
<line x1="318.2" y1="540.05" x2="1084.8" y2="540.05" stroke="#c3d9e4" stroke-width="0.5"/>
<svg x="364.65" y="542.34" width="3.5" height="3.19" viewBox="0 0 44 40"><rect x="0" y="2.4" width="44" height="7.6" fill="#566a75"/><rect x="0" y="16" width="44" height="7.6" fill="#566a75"/><rect x="0" y="29.6" width="44" height="7.6" fill="#566a75"/></svg>
<svg x="446.65" y="542.34" width="3.5" height="3.19" viewBox="0 0 44 40"><rect x="0" y="2.4" width="44" height="7.6" fill="#566a75"/><rect x="0" y="16" width="44" height="7.6" fill="#566a75"/><rect x="0" y="29.6" width="44" height="7.6" fill="#566a75"/></svg>
<svg x="544.45" y="542.34" width="3.5" height="3.19" viewBox="0 0 44 40"><rect x="0" y="2.4" width="44" height="7.6" fill="#566a75"/><rect x="0" y="16" width="44" height="7.6" fill="#566a75"/><rect x="0" y="29.6" width="44" height="7.6" fill="#566a75"/></svg>
<svg x="657.85" y="542.34" width="3.5" height="3.19" viewBox="0 0 44 40"><rect x="0" y="2.4" width="44" height="7.6" fill="#566a75"/><rect x="0" y="16" width="44" height="7.6" fill="#566a75"/><rect x="0" y="29.6" width="44" height="7.6" fill="#566a75"/></svg>
<svg x="1044.85" y="542.34" width="3.5" height="3.19" viewBox="0 0 44 40"><rect x="0" y="2.4" width="44" height="7.6" fill="#566a75"/><rect x="0" y="16" width="44" height="7.6" fill="#566a75"/><rect x="0" y="29.6" width="44" height="7.6" fill="#566a75"/></svg>
<svg x="1079.05" y="542.34" width="3.5" height="3.19" viewBox="0 0 44 40"><rect x="0" y="2.4" width="44" height="7.6" fill="#566a75"/><rect x="0" y="16" width="44" height="7.6" fill="#566a75"/><rect x="0" y="29.6" width="44" height="7.6" fill="#566a75"/></svg>
<rect x="369.9" y="539.8" width="1" height="8.27" fill="#cbdde7"/>
<rect x="451.7" y="539.8" width="1" height="8.27" fill="#cbdde7"/>
<rect x="549.9" y="539.8" width="1" height="8.27" fill="#cbdde7"/>
<rect x="663.7" y="539.8" width="1" height="8.27" fill="#cbdde7"/>
<rect x="1050" y="539.8" width="1" height="8.27" fill="#cbdde7"/>
<rect x="318.2" y="548.07" width="766.6" height="8.27" fill="#26a499"/>
<rect x="369.9" y="548.07" width="1" height="8.27" fill="#5dbdb3"/>
<rect x="451.7" y="548.07" width="1" height="8.27" fill="#5dbdb3"/>
<rect x="549.9" y="548.07" width="1" height="8.27" fill="#5dbdb3"/>
<rect x="663.7" y="548.07" width="1" height="8.27" fill="#5dbdb3"/>
<rect x="1050" y="548.07" width="1" height="8.27" fill="#5dbdb3"/>
<line x1="318.2" y1="564.58" x2="1084.8" y2="564.58" stroke="#cbd8e0" stroke-width="0.55" stroke-dasharray="1 1"/>
<line x1="370.45" y1="556.34" x2="370.45" y2="564.61" stroke="#c9dae4" stroke-width="0.5" stroke-dasharray="1 1"/>
<line x1="452.25" y1="556.34" x2="452.25" y2="564.61" stroke="#c9dae4" stroke-width="0.5" stroke-dasharray="1 1"/>
<line x1="550.45" y1="556.34" x2="550.45" y2="564.61" stroke="#c9dae4" stroke-width="0.5" stroke-dasharray="1 1"/>
<line x1="664.25" y1="556.34" x2="664.25" y2="564.61" stroke="#c9dae4" stroke-width="0.5" stroke-dasharray="1 1"/>
<line x1="1050.55" y1="556.34" x2="1050.55" y2="564.61" stroke="#c9dae4" stroke-width="0.5" stroke-dasharray="1 1"/>
<line x1="318.45" y1="556.34" x2="318.45" y2="564.61" stroke="#c9dae4" stroke-width="0.5" stroke-dasharray="1 1"/>
<line x1="1084.55" y1="556.34" x2="1084.55" y2="564.61" stroke="#c9dae4" stroke-width="0.5" stroke-dasharray="1 1"/>
<line x1="318.2" y1="572.85" x2="1084.8" y2="572.85" stroke="#cbd8e0" stroke-width="0.55" stroke-dasharray="1 1"/>
<line x1="370.45" y1="564.61" x2="370.45" y2="572.88" stroke="#c9dae4" stroke-width="0.5" stroke-dasharray="1 1"/>
<line x1="452.25" y1="564.61" x2="452.25" y2="572.88" stroke="#c9dae4" stroke-width="0.5" stroke-dasharray="1 1"/>
<line x1="550.45" y1="564.61" x2="550.45" y2="572.88" stroke="#c9dae4" stroke-width="0.5" stroke-dasharray="1 1"/>
<line x1="664.25" y1="564.61" x2="664.25" y2="572.88" stroke="#c9dae4" stroke-width="0.5" stroke-dasharray="1 1"/>
<line x1="1050.55" y1="564.61" x2="1050.55" y2="572.88" stroke="#c9dae4" stroke-width="0.5" stroke-dasharray="1 1"/>
<line x1="318.45" y1="564.61" x2="318.45" y2="572.88" stroke="#c9dae4" stroke-width="0.5" stroke-dasharray="1 1"/>
<line x1="1084.55" y1="564.61" x2="1084.55" y2="572.88" stroke="#c9dae4" stroke-width="0.5" stroke-dasharray="1 1"/>
<line x1="318.2" y1="581.12" x2="1084.8" y2="581.12" stroke="#cbd8e0" stroke-width="0.55" stroke-dasharray="1 1"/>
<line x1="370.45" y1="572.88" x2="370.45" y2="581.15" stroke="#c9dae4" stroke-width="0.5" stroke-dasharray="1 1"/>
<line x1="452.25" y1="572.88" x2="452.25" y2="581.15" stroke="#c9dae4" stroke-width="0.5" stroke-dasharray="1 1"/>
<line x1="550.45" y1="572.88" x2="550.45" y2="581.15" stroke="#c9dae4" stroke-width="0.5" stroke-dasharray="1 1"/>
<line x1="664.25" y1="572.88" x2="664.25" y2="581.15" stroke="#c9dae4" stroke-width="0.5" stroke-dasharray="1 1"/>
<line x1="1050.55" y1="572.88" x2="1050.55" y2="581.15" stroke="#c9dae4" stroke-width="0.5" stroke-dasharray="1 1"/>
<line x1="318.45" y1="572.88" x2="318.45" y2="581.15" stroke="#c9dae4" stroke-width="0.5" stroke-dasharray="1 1"/>
<line x1="1084.55" y1="572.88" x2="1084.55" y2="581.15" stroke="#c9dae4" stroke-width="0.5" stroke-dasharray="1 1"/>
<rect x="315.2" y="599" width="774.2" height="26.2" rx="1.1" fill="none" stroke="#e4e6e8" stroke-width="0.8"/>
<rect x="320.2" y="592.3" width="43" height="12.9" rx="1" fill="#0588d1"/>
<rect x="320.3" y="608.6" width="764.5" height="12.9" fill="#f4f4f4"/>
<line x1="320.3" y1="620.95" x2="1084.8" y2="620.95" stroke="#e0e6e9" stroke-width="1.1"/>
</svg>
<span class="t" style="left:323.20px;top:331px;transform:translateY(0.07px) rotate(0.03deg);font-size:5.55px;line-height:7.77px;color:#fff;letter-spacing:-0.220px;-webkit-text-stroke:0.12px #fff;">Customer Impairment</span>
<span class="t" style="left:384.20px;top:331px;transform:translateY(0.07px) rotate(0.03deg);font-size:5.55px;line-height:7.77px;color:#fff;letter-spacing:-0.300px;-webkit-text-stroke:0.12px #fff;text-decoration:underline;text-decoration-thickness:0.5px;">Edit Customer Recovery Data</span>
<span class="t" style="left:931.00px;top:330px;transform:translateY(0.90px) rotate(0.03deg);font-size:5px;line-height:7px;color:#aab;letter-spacing:0.036px;">free text search</span>
<span class="t" style="left:314.20px;top:360px;transform:translateY(0.67px) rotate(0.03deg);font-size:5.55px;line-height:7.77px;color:#656d73;letter-spacing:-0.259px;">Selected Collateral:</span>
<span class="t" style="left:361.00px;top:361px;transform:translateY(0.46px) rotate(0.03deg);font-size:4.4px;line-height:6.16px;color:#2c363d;letter-spacing:0.136px;font-style:italic;-webkit-text-stroke:0.1px #2c363d;">0000000000000003418-1128374-1751535</span>
<span class="t" style="left:460.00px;top:360px;transform:translateY(0.67px) rotate(0.03deg);font-size:5.55px;line-height:7.77px;color:#656d73;letter-spacing:-0.325px;">Set Of Scenarios:</span>
<span class="t" style="left:502.20px;top:361px;transform:translateY(0.46px) rotate(0.03deg);font-size:4.4px;line-height:6.16px;color:#2c363d;letter-spacing:-0.016px;font-style:italic;-webkit-text-stroke:0.1px #2c363d;">40-40-20</span>
<span class="t" style="left:314.00px;top:368px;transform:translateY(0.07px) rotate(0.03deg);font-size:5.55px;line-height:7.77px;color:#656d73;letter-spacing:-0.252px;">Posting Date:</span>
<span class="t" style="left:348.00px;top:368px;transform:translateY(0.86px) rotate(0.03deg);font-size:4.4px;line-height:6.16px;color:#2c363d;letter-spacing:-0.057px;font-style:italic;-webkit-text-stroke:0.1px #2c363d;">Feb 28, 2018</span>
<span class="t" style="left:376.60px;top:368px;transform:translateY(0.07px) rotate(0.03deg);font-size:5.55px;line-height:7.77px;color:#656d73;letter-spacing:-0.231px;">Valid from:</span>
<span class="t" style="left:404.20px;top:368px;transform:translateY(0.86px) rotate(0.03deg);font-size:4.4px;line-height:6.16px;color:#2c363d;letter-spacing:-0.048px;font-style:italic;-webkit-text-stroke:0.1px #2c363d;">Feb 28, 2018</span>
<span class="t" style="left:321.40px;top:387px;transform:translateY(0.77px) rotate(0.03deg);font-size:5.55px;line-height:7.77px;color:#6b757c;letter-spacing:-0.135px;">Static Data</span>
<span class="t" style="left:359.80px;top:387px;transform:translateY(0.77px) rotate(0.03deg);font-size:5.55px;line-height:7.77px;color:#b4babd;letter-spacing:-0.069px;">Documentation</span>
<span class="t" style="left:408.80px;top:387px;transform:translateY(0.77px) rotate(0.03deg);font-size:5.55px;line-height:7.77px;color:#6b757c;letter-spacing:-0.185px;">Scenarios</span>
<span class="t" style="left:444.50px;top:387px;transform:translateY(0.77px) rotate(0.03deg);font-size:5.55px;line-height:7.77px;color:#b4babd;letter-spacing:-0.167px;">Irregular Recoveries</span>
<span class="t" style="left:503.70px;top:387px;transform:translateY(0.77px) rotate(0.03deg);font-size:5.55px;line-height:7.77px;color:#b4babd;letter-spacing:-0.191px;">Regular Recoveries</span>
<span class="t" style="left:561.60px;top:387px;transform:translateY(0.77px) rotate(0.03deg);font-size:5.55px;line-height:7.77px;color:#6b757c;letter-spacing:-0.122px;">Market Values</span>
<span class="t" style="left:607.70px;top:387px;transform:translateY(0.77px) rotate(0.03deg);font-size:5.55px;line-height:7.77px;color:#6b757c;letter-spacing:-0.104px;">Collateral Validity</span>
<span class="t" style="left:660.90px;top:387px;transform:translateY(0.77px) rotate(0.03deg);font-size:5.55px;line-height:7.77px;color:#2a8fd8;letter-spacing:-0.101px;">Allocation of Collateral</span>
<span class="t" style="left:726.20px;top:387px;transform:translateY(0.77px) rotate(0.03deg);font-size:5.55px;line-height:7.77px;color:#6b757c;letter-spacing:-0.142px;">Simulated Data</span>
<span class="t" style="left:320.50px;top:407px;transform:translateY(0.56px) rotate(0.03deg);font-size:4.9px;line-height:6.86px;color:#555;letter-spacing:0.073px;">Allocation by:</span>
<span class="t" style="left:320.50px;top:426px;transform:translateY(0.26px) rotate(0.03deg);font-size:4.9px;line-height:6.86px;color:#555;letter-spacing:0.050px;">Scenario:</span>
<span class="t" style="left:320.50px;top:442px;transform:translateY(0.56px) rotate(0.03deg);font-size:4.9px;line-height:6.86px;color:#555;letter-spacing:0.069px;">Market Value:</span>
<span class="t" style="left:320.50px;top:457px;transform:translateY(0.56px) rotate(0.03deg);font-size:4.9px;line-height:6.86px;color:#555;letter-spacing:0.066px;">Apply to addional Scenarios:</span>
<span class="t" style="left:457.00px;top:408px;transform:translateY(0.96px) rotate(0.03deg);font-size:4.9px;line-height:6.86px;color:#555;letter-spacing:-0.146px;">Rank</span>
<span class="t" style="left:482.00px;top:408px;transform:translateY(0.96px) rotate(0.03deg);font-size:4.9px;line-height:6.86px;color:#555;letter-spacing:0.158px;">Value</span>
<span class="t" style="left:456.00px;top:426px;transform:translateY(0.86px) rotate(0.03deg);font-size:4.9px;line-height:6.86px;color:#555;letter-spacing:0.041px;">Scenario 1</span>
<span class="t" style="left:492.70px;top:426px;transform:translateY(0.86px) rotate(0.03deg);font-size:4.9px;line-height:6.86px;color:#555;letter-spacing:0.041px;">Scenario 2</span>
<span class="t" style="left:529.00px;top:426px;transform:translateY(0.86px) rotate(0.03deg);font-size:4.9px;line-height:6.86px;color:#555;letter-spacing:0.041px;">Scenario 3</span>
<span class="t" style="left:448.50px;top:442px;transform:translateY(0.74px) rotate(0.03deg);font-size:4.6px;line-height:6.44px;color:#555;letter-spacing:-0.039px;">250,000.00 EUR</span>
<span class="t" style="left:576.40px;top:442px;transform:translateY(0.56px) rotate(0.03deg);font-size:4.9px;line-height:6.86px;color:#555;letter-spacing:0.064px;">Expected Liquidation Costs:</span>
<span class="t" style="left:704.20px;top:442px;transform:translateY(0.74px) rotate(0.03deg);font-size:4.6px;line-height:6.44px;color:#555;letter-spacing:-0.016px;">100,000.00 EUR</span>
<span class="t" style="left:832.00px;top:442px;transform:translateY(0.56px) rotate(0.03deg);font-size:4.9px;line-height:6.86px;color:#555;letter-spacing:0.037px;">Expected Liquidation Date:</span>
<span class="t" style="left:960.00px;top:442px;transform:translateY(0.74px) rotate(0.03deg);font-size:4.6px;line-height:6.44px;color:#555;letter-spacing:0.054px;">Jan 31, 2022</span>
<span class="t" style="left:318.60px;top:474px;transform:translateY(0.02px) rotate(0.03deg);font-size:4.8px;line-height:6.72px;color:#2a2a2a;letter-spacing:-0.089px;font-style:italic;-webkit-text-stroke:0.05px #2a2a2a;">Ranked</span>
<span class="t" style="left:318.60px;top:528px;transform:translateY(0.62px) rotate(0.03deg);font-size:4.8px;line-height:6.72px;color:#2a2a2a;letter-spacing:-0.030px;font-style:italic;-webkit-text-stroke:0.05px #2a2a2a;">Not Used</span>
<span class="t" style="left:329.00px;top:486px;transform:translateY(0.94px) rotate(0.03deg);font-size:4.65px;line-height:6.51px;color:#444;letter-spacing:-0.130px;">Customer ID</span>
<span class="t" style="left:392.50px;top:486px;transform:translateY(0.94px) rotate(0.03deg);font-size:4.65px;line-height:6.51px;color:#444;letter-spacing:-0.138px;">Customer Name</span>
<span class="t" style="left:491.50px;top:486px;transform:translateY(0.94px) rotate(0.03deg);font-size:4.65px;line-height:6.51px;color:#444;letter-spacing:-0.234px;">Deal ID</span>
<span class="t" style="left:594.50px;top:486px;transform:translateY(0.94px) rotate(0.03deg);font-size:4.65px;line-height:6.51px;color:#444;letter-spacing:-0.194px;">Deal Type</span>
<span class="t" style="left:843.40px;top:486px;transform:translateY(0.94px) rotate(0.03deg);font-size:4.65px;line-height:6.51px;color:#444;letter-spacing:-0.066px;">Description</span>
<span class="t" style="left:1058.00px;top:486px;transform:translateY(0.94px) rotate(0.03deg);font-size:4.65px;line-height:6.51px;color:#444;letter-spacing:-0.187px;">Source</span>
<span class="t" style="left:319.50px;top:495px;transform:translateY(0.21px) rotate(0.03deg);font-size:4.65px;line-height:6.51px;color:#59636a;letter-spacing:0.037px;">0000000000000003418</span>
<span class="t" style="left:372.00px;top:495px;transform:translateY(0.21px) rotate(0.03deg);font-size:4.65px;line-height:6.51px;color:#59636a;letter-spacing:-0.403px;">DUMMYCUST</span>
<span class="t" style="left:454.00px;top:495px;transform:translateY(0.21px) rotate(0.03deg);font-size:4.65px;line-height:6.51px;color:#59636a;letter-spacing:-0.102px;">9644034939117190</span>
<span class="t" style="left:551.80px;top:495px;transform:translateY(0.21px) rotate(0.03deg);font-size:4.65px;line-height:6.51px;color:#59636a;letter-spacing:-0.182px;">Loan</span>
<span class="t" style="left:665.40px;top:495px;transform:translateY(0.21px) rotate(0.03deg);font-size:4.65px;line-height:6.51px;color:#59636a;letter-spacing:-0.099px;">According to contract 2017-984567 the usage of the collateral has been agreed.</span>
<span class="t" style="left:1052.00px;top:495px;transform:translateY(0.21px) rotate(0.03deg);font-size:4.65px;line-height:6.51px;color:#59636a;letter-spacing:-0.488px;">DELIVERY</span>
<span class="t" style="left:319.50px;top:503px;transform:translateY(0.49px) rotate(0.03deg);font-size:4.65px;line-height:6.51px;color:#59636a;letter-spacing:0.037px;">0000000000000003418</span>
<span class="t" style="left:372.00px;top:503px;transform:translateY(0.49px) rotate(0.03deg);font-size:4.65px;line-height:6.51px;color:#59636a;letter-spacing:-0.403px;">DUMMYCUST</span>
<span class="t" style="left:454.00px;top:503px;transform:translateY(0.49px) rotate(0.03deg);font-size:4.65px;line-height:6.51px;color:#59636a;letter-spacing:-0.125px;">9644034950817190</span>
<span class="t" style="left:551.80px;top:503px;transform:translateY(0.49px) rotate(0.03deg);font-size:4.65px;line-height:6.51px;color:#59636a;letter-spacing:-0.182px;">Loan</span>
<span class="t" style="left:1052.00px;top:503px;transform:translateY(0.49px) rotate(0.03deg);font-size:4.65px;line-height:6.51px;color:#59636a;letter-spacing:-0.488px;">DELIVERY</span>
<span class="t" style="left:319.50px;top:511px;transform:translateY(0.76px) rotate(0.03deg);font-size:4.65px;line-height:6.51px;color:#fff;letter-spacing:0.037px;-webkit-text-stroke:0.1px #fff;">0000000000000003418</span>
<span class="t" style="left:372.00px;top:511px;transform:translateY(0.76px) rotate(0.03deg);font-size:4.65px;line-height:6.51px;color:#fff;letter-spacing:-0.403px;-webkit-text-stroke:0.1px #fff;">DUMMYCUST</span>
<span class="t" style="left:454.00px;top:511px;transform:translateY(0.76px) rotate(0.03deg);font-size:4.65px;line-height:6.51px;color:#fff;letter-spacing:-0.125px;-webkit-text-stroke:0.1px #fff;">9644034938917190</span>
<span class="t" style="left:551.80px;top:511px;transform:translateY(0.76px) rotate(0.03deg);font-size:4.65px;line-height:6.51px;color:#fff;letter-spacing:-0.182px;-webkit-text-stroke:0.1px #fff;">Loan</span>
<span class="t" style="left:1052.00px;top:511px;transform:translateY(0.76px) rotate(0.03deg);font-size:4.65px;line-height:6.51px;color:#fff;letter-spacing:-0.488px;-webkit-text-stroke:0.1px #fff;">DELIVERY</span>
<span class="t" style="left:329.00px;top:541px;transform:translateY(0.75px) rotate(0.03deg);font-size:4.65px;line-height:6.51px;color:#444;letter-spacing:-0.130px;">Customer ID</span>
<span class="t" style="left:392.50px;top:541px;transform:translateY(0.75px) rotate(0.03deg);font-size:4.65px;line-height:6.51px;color:#444;letter-spacing:-0.138px;">Customer Name</span>
<span class="t" style="left:491.50px;top:541px;transform:translateY(0.75px) rotate(0.03deg);font-size:4.65px;line-height:6.51px;color:#444;letter-spacing:-0.234px;">Deal ID</span>
<span class="t" style="left:594.50px;top:541px;transform:translateY(0.75px) rotate(0.03deg);font-size:4.65px;line-height:6.51px;color:#444;letter-spacing:-0.194px;">Deal Type</span>
<span class="t" style="left:843.40px;top:541px;transform:translateY(0.75px) rotate(0.03deg);font-size:4.65px;line-height:6.51px;color:#444;letter-spacing:-0.066px;">Description</span>
<span class="t" style="left:1058.00px;top:541px;transform:translateY(0.75px) rotate(0.03deg);font-size:4.65px;line-height:6.51px;color:#444;letter-spacing:-0.187px;">Source</span>
<span class="t" style="left:319.50px;top:550px;transform:translateY(0.01px) rotate(0.03deg);font-size:4.65px;line-height:6.51px;color:#fff;letter-spacing:0.037px;-webkit-text-stroke:0.1px #fff;">0000000000000003418</span>
<span class="t" style="left:372.00px;top:550px;transform:translateY(0.01px) rotate(0.03deg);font-size:4.65px;line-height:6.51px;color:#fff;letter-spacing:-0.403px;-webkit-text-stroke:0.1px #fff;">DUMMYCUST</span>
<span class="t" style="left:454.00px;top:550px;transform:translateY(0.01px) rotate(0.03deg);font-size:4.65px;line-height:6.51px;color:#fff;letter-spacing:-0.125px;-webkit-text-stroke:0.1px #fff;">9644034948417190</span>
<span class="t" style="left:551.80px;top:550px;transform:translateY(0.01px) rotate(0.03deg);font-size:4.65px;line-height:6.51px;color:#fff;letter-spacing:-0.182px;-webkit-text-stroke:0.1px #fff;">Loan</span>
<span class="t" style="left:1052.00px;top:550px;transform:translateY(0.01px) rotate(0.03deg);font-size:4.65px;line-height:6.51px;color:#fff;letter-spacing:-0.488px;-webkit-text-stroke:0.1px #fff;">DELIVERY</span>
<span class="t" style="left:319.50px;top:558px;transform:translateY(0.28px) rotate(0.03deg);font-size:4.65px;line-height:6.51px;color:#59636a;letter-spacing:0.037px;">0000000000000003418</span>
<span class="t" style="left:372.00px;top:558px;transform:translateY(0.28px) rotate(0.03deg);font-size:4.65px;line-height:6.51px;color:#59636a;letter-spacing:-0.403px;">DUMMYCUST</span>
<span class="t" style="left:454.00px;top:558px;transform:translateY(0.28px) rotate(0.03deg);font-size:4.65px;line-height:6.51px;color:#59636a;letter-spacing:-0.125px;">9644034950417190</span>
<span class="t" style="left:551.80px;top:558px;transform:translateY(0.28px) rotate(0.03deg);font-size:4.65px;line-height:6.51px;color:#59636a;letter-spacing:-0.182px;">Loan</span>
<span class="t" style="left:1052.00px;top:558px;transform:translateY(0.28px) rotate(0.03deg);font-size:4.65px;line-height:6.51px;color:#59636a;letter-spacing:-0.488px;">DELIVERY</span>
<span class="t" style="left:319.50px;top:566px;transform:translateY(0.55px) rotate(0.03deg);font-size:4.65px;line-height:6.51px;color:#59636a;letter-spacing:0.037px;">0000000000000003418</span>
<span class="t" style="left:372.00px;top:566px;transform:translateY(0.55px) rotate(0.03deg);font-size:4.65px;line-height:6.51px;color:#59636a;letter-spacing:-0.403px;">DUMMYCUST</span>
<span class="t" style="left:454.00px;top:566px;transform:translateY(0.55px) rotate(0.03deg);font-size:4.65px;line-height:6.51px;color:#59636a;letter-spacing:-0.125px;">9644034950617190</span>
<span class="t" style="left:551.80px;top:566px;transform:translateY(0.55px) rotate(0.03deg);font-size:4.65px;line-height:6.51px;color:#59636a;letter-spacing:-0.182px;">Loan</span>
<span class="t" style="left:1052.00px;top:566px;transform:translateY(0.55px) rotate(0.03deg);font-size:4.65px;line-height:6.51px;color:#59636a;letter-spacing:-0.488px;">DELIVERY</span>
<span class="t" style="left:319.50px;top:574px;transform:translateY(0.83px) rotate(0.03deg);font-size:4.65px;line-height:6.51px;color:#59636a;letter-spacing:0.037px;">0000000000000003418</span>
<span class="t" style="left:372.00px;top:574px;transform:translateY(0.83px) rotate(0.03deg);font-size:4.65px;line-height:6.51px;color:#59636a;letter-spacing:-0.403px;">DUMMYCUST</span>
<span class="t" style="left:454.00px;top:574px;transform:translateY(0.83px) rotate(0.03deg);font-size:4.65px;line-height:6.51px;color:#59636a;letter-spacing:-0.125px;">9644034951017190</span>
<span class="t" style="left:551.80px;top:574px;transform:translateY(0.83px) rotate(0.03deg);font-size:4.65px;line-height:6.51px;color:#59636a;letter-spacing:-0.182px;">Loan</span>
<span class="t" style="left:1052.00px;top:574px;transform:translateY(0.83px) rotate(0.03deg);font-size:4.65px;line-height:6.51px;color:#59636a;letter-spacing:-0.488px;">DELIVERY</span>
<span class="t" style="left:326.80px;top:595px;transform:translateY(0.66px) rotate(0.03deg);font-size:5.4px;line-height:7.56px;color:#fff;letter-spacing:-0.219px;">Process Note</span>
<span class="t" style="left:323.60px;top:611px;transform:translateY(0.24px) rotate(0.03deg);font-size:5.6px;line-height:7.84px;color:#a2a2a2;letter-spacing:-0.286px;">Enter Process Note</span>
<span class="t" style="left:665.00px;top:633px;transform:translateY(0.30px) rotate(0.03deg);font-size:5px;line-height:7px;color:#4c4c4c;letter-spacing:-0.028px;">© FERNBACH Financial Software</span>
</div></body></html>
